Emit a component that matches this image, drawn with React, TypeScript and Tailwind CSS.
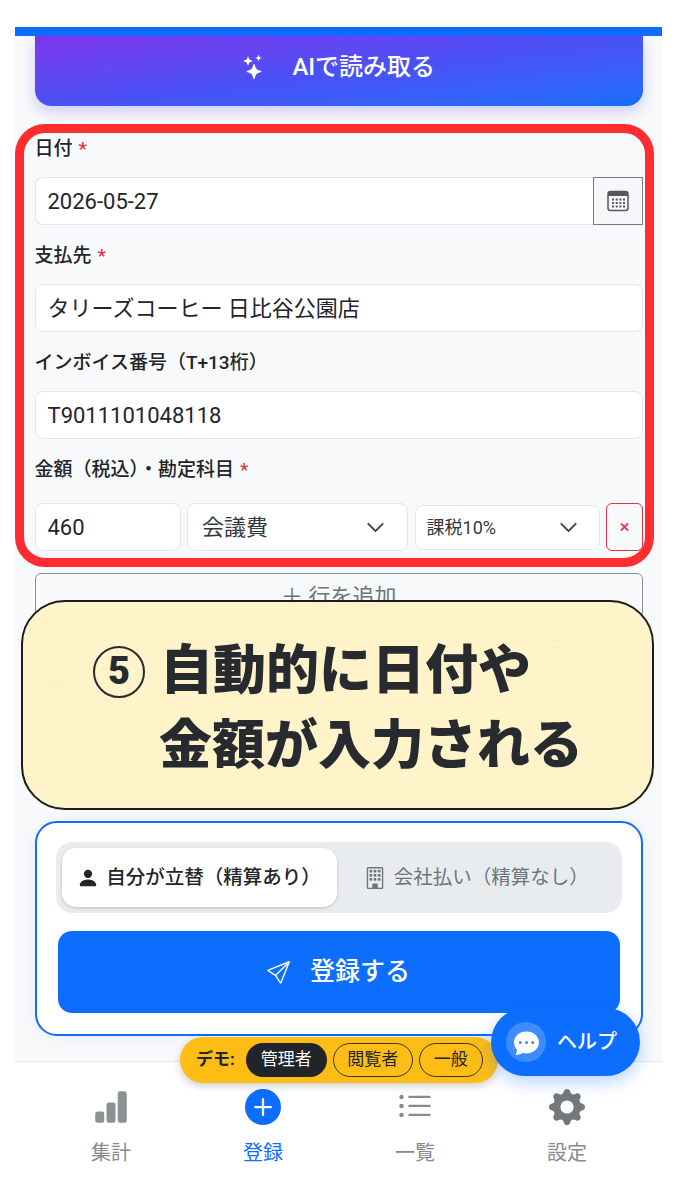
import { BsBarChartFill, BsBuilding, BsChevronDown, BsChatDotsFill, BsGearFill, BsListUl, BsPersonFill, BsPlusCircleFill, BsSend, BsStars } from "react-icons/bs";

const CalendarIcon = () => (
    <svg width="22" height="22" viewBox="0 0 22 22" fill="none">
        <rect x="1" y="1.5" width="20" height="19" rx="2.5" stroke="#55595d" strokeWidth="1.5" />
        <path d="M1 3.5a2 2 0 0 1 2-2h16a2 2 0 0 1 2 2V6H1z" fill="#55595d" />
        {[6, 9.7, 13.4, 17].map((x) =>
            [9.5, 13, 16.5].map((y) => <rect key={`${x}-${y}`} x={x - 1} y={y - 1} width="2" height="2" fill="#55595d" />)
        )}
    </svg>
);

const Label = ({ text, required }: { text: string; required?: boolean }) => (
    <div className="h-[26px] flex items-center text-[19px] leading-none font-medium text-[#212529]">
        {text}
        {required && <span className="ml-[6px] text-[#dc3545]">*</span>}
    </div>
);

const boxClass = "bg-white border border-[#e3e6e9] rounded-[8px] flex items-center";
const inputClass = `${boxClass} text-[22px] text-[#212529]`;

const NavItem = ({ icon, text, active }: { icon: React.ReactNode; text: string; active?: boolean }) => (
    <div className={`flex flex-col items-center ${active ? "text-[#0d6efd]" : "text-[#868b90]"}`}>
        <div className="h-[46px] flex items-center justify-center">{icon}</div>
        <div className="mt-[9px] text-[20px] leading-[28px]">{text}</div>
    </div>
);

export default function App() {
    return (
        <div className="relative w-[675px] h-[1200px] overflow-hidden bg-white font-['Roboto','Noto_Sans_CJK_JP',sans-serif]">
            <div className="h-[27px]" />
            <main className="ml-[15px] w-[647px] h-[1035px] overflow-hidden bg-[#f8f9fa] border-b border-[#e6e8eb]">
                <div className="h-[9px] bg-[#0d6efd]" />
                <div className="pl-[19.5px] pr-[19px]">
                    <button className="w-full h-[70px] pb-[8px] rounded-b-[16px] bg-gradient-to-br from-[#7c35ee] via-[#4a50f5] to-[#0d6efd] shadow-[0_6px_14px_rgba(90,70,230,0.25)] text-white text-[24px] font-medium flex items-center justify-center gap-[26px]">
                        <BsStars size={24} />
                        <span>AIで読み取る</span>
                    </button>

                    <div className="mt-[29px]">
                        <Label text="日付" required />
                        <div className="mt-[16px] flex h-[48px]">
                            <div className={`${inputClass} flex-1 pl-[12px] rounded-r-none border-r-0`}>2026-05-27</div>
                            <div className="w-[50px] border border-[#777c80] bg-[#f6f7f8] flex items-center justify-center">
                                <CalendarIcon />
                            </div>
                        </div>
                    </div>

                    <div className="mt-[17px]">
                        <Label text="支払先" required />
                        <div className={`${inputClass} mt-[16px] h-[48px] pl-[12px]`}>タリーズコーヒー 日比谷公園店</div>
                    </div>

                    <div className="mt-[17px]">
                        <Label text="インボイス番号（T+13桁）" />
                        <div className={`${inputClass} mt-[16px] h-[48px] pl-[12px]`}>T9011101048118</div>
                    </div>

                    <div className="mt-[17px]">
                        <Label text="金額（税込）・勘定科目" required />
                        <div className="mt-[21px] flex items-center h-[48px]">
                            <div className={`${inputClass} w-[147px] h-[48px] pl-[12px]`}>460</div>
                            <div className={`${boxClass} ml-[6px] w-[221px] h-[48px] pl-[14px] pr-[22px] justify-between text-[22px] text-[#343a40]`}>
                                会議費
                                <BsChevronDown size={19} strokeWidth={0.8} />
                            </div>
                            <div className={`${boxClass} ml-[7px] w-[186px] h-[45px] pl-[11px] pr-[21px] justify-between text-[18px] text-[#343a40]`}>
                                課税10%
                                <BsChevronDown size={19} strokeWidth={0.8} />
                            </div>
                            <div className="ml-[6px] w-[37px] h-[48px] border border-[#dc3545] rounded-[6px] flex items-center justify-center text-[#dc3545] text-[19px]">×</div>
                        </div>
                    </div>

                    <div className="mt-[22px] h-[46px] border border-[#8b9095] rounded-[6px] flex items-center justify-center text-[22px] text-[#6c757d]">
                        ＋ 行を追加
                    </div>
                    <div className="mt-[9px] text-right text-[20px] leading-[24px] text-[#6c757d]">合計 460円</div>
                    <div className="mt-[21px] text-[20px] leading-[24px] text-[#6c757d]">備考</div>

                    <div className="mt-[124px] h-[215px] bg-white border-2 border-[#0d6efd] rounded-[22px] shadow-[0_0_18px_rgba(13,110,253,0.08)] px-[19px] pt-[19px]">
                        <div className="h-[71px] rounded-[16px] bg-[#e9ecef] p-[6px] flex items-center">
                            <div className="w-[275px] h-[59px] rounded-[14px] bg-white shadow-[0_1px_3px_rgba(0,0,0,0.2)] flex items-center justify-center gap-[7px] text-[19.5px] font-medium text-[#212529]">
                                <BsPersonFill size={22} />
                                自分が立替（精算あり）
                            </div>
                            <div className="flex-1 flex items-center justify-center gap-[8px] text-[19.5px] text-[#6c757d]">
                                <BsBuilding size={22} />
                                会社払い（精算なし）
                            </div>
                        </div>
                        <button className="mt-[18px] ml-[2px] w-[562px] h-[82px] rounded-[14px] bg-[#0d6efd] text-white text-[25px] font-medium flex items-center justify-center gap-[20px]">
                            <BsSend size={23} />
                            登録する
                        </button>
                    </div>
                </div>
            </main>

            <nav className="ml-[15px] w-[647px] pl-[20px] pr-[19px] grid grid-cols-4 pt-[22px]">
                <NavItem icon={<BsBarChartFill size={36} className="text-[#8c9196]" />} text="集計" />
                <NavItem icon={<BsPlusCircleFill size={36} />} text="登録" active />
                <NavItem icon={<BsListUl size={36} className="text-[#868b90]" />} text="一覧" />
                <NavItem icon={<BsGearFill size={36} className="text-[#73787d]" />} text="設定" />
            </nav>

            {/* annotation overlays */}
            <div className="absolute left-[15px] top-[124px] w-[639px] h-[443px] border-[9px] border-[#ff2d30] rounded-[30px]" />
            <div className="absolute left-[21px] top-[600px] w-[633px] h-[210px] bg-[#fff3c8]/98 border-2 border-[#1c1c1c] rounded-[44px] font-black text-[53px] leading-[75px] text-[#272b30]">
                <div className="pl-[70px] pt-[32px] flex items-center">
                    <span className="w-[52px] h-[52px] rounded-full border-2 border-[#272b30] flex items-center justify-center text-[38px] mr-[15px]">5</span>
                    自動的に日付や
                </div>
                <div className="pl-[136px]">金額が入力される</div>
            </div>

            <div className="absolute left-[180px] top-[1037px] w-[318px] h-[46px] rounded-full bg-[#fdbd14] shadow-[0_3px_8px_rgba(0,0,0,0.2)] flex items-center pl-[16px] text-[17px] text-[#212529]">
                <span className="font-bold mr-[11px]">デモ:</span>
                <span className="w-[81px] h-[34px] rounded-full bg-[#212529] text-white flex items-center justify-center">管理者</span>
                <span className="ml-[6px] w-[80px] h-[34px] rounded-full border border-[#3a3520] flex items-center justify-center">閲覧者</span>
                <span className="ml-[6px] w-[64px] h-[34px] rounded-full border border-[#3a3520] flex items-center justify-center">一般</span>
            </div>

            <div className="absolute left-[491px] top-[1008px] w-[149px] h-[68px] rounded-[34px] bg-[#0d6efd] shadow-[0_6px_18px_rgba(13,110,253,0.3)] flex items-center pl-[15px] text-white text-[20px] font-medium">
                <div className="w-[40px] h-[40px] rounded-full bg-white/20 flex items-center justify-center">
                    <BsChatDotsFill size={25} />
                </div>
                <span className="ml-[11px]">ヘルプ</span>
            </div>
        </div>
    );
}
